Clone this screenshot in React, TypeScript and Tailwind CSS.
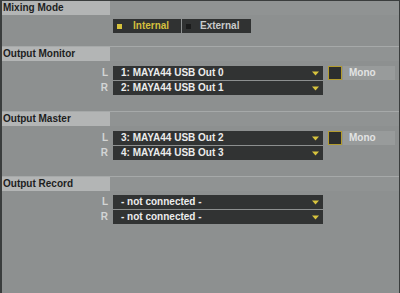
import React from "react";

const Arrow = () => (
  <svg width="7" height="5" viewBox="0 0 7 5" className="block">
    <path d="M0 0.5 L7 0.5 L3.5 4.5 Z" fill="#d8c43e" />
  </svg>
);

const Header = ({ title }: { title: string }) => (
  <div className="flex h-[14px]">
    <div className="w-[108px] bg-[#b3b5b5] pl-[1px] text-[10px] font-bold leading-[14px] text-[#1d1e1e]">
      {title}
    </div>
    <div className="flex-1 bg-[#909393]" />
  </div>
);

const Sep = () => <div className="h-px bg-[#a6a9a9]" />;

const Row = ({ ch, value, mono }: { ch: string; value: string; mono?: boolean }) => (
  <div className="flex h-[14px] items-center">
    <div className="w-[111px] pr-[5px] text-right text-[10px] font-bold leading-[14px] text-[#d3d5d5]">{ch}</div>
    <div className="flex h-[14px] w-[210px] items-center justify-between bg-[#313333] pl-[8px] pr-[4px]">
      <span className="text-[10px] font-bold leading-[14px] text-[#ececec]">{value}</span>
      <Arrow />
    </div>
    {mono && (
      <>
        <div className="ml-[5px] h-[14px] w-[14px] border border-[#b39c2e] bg-[#2c2e2e]" />
        <div className="ml-px h-[14px] w-[52px] bg-[#989b9b] pl-[6px] text-[10px] font-bold leading-[14px] text-[#e2e3e3]">
          Mono
        </div>
      </>
    )}
  </div>
);

export default function App() {
  return (
    <div
      className="h-[293px] w-[400px] overflow-hidden border-l-2 border-r border-t border-[#3a3d3d] bg-[#8d9090]"
      style={{ fontFamily: '"Liberation Sans", Arial, sans-serif' }}
    >
      <div className="flex flex-col">
        {/* Mixing Mode */}
        <Header title="Mixing Mode" />
        <div className="mt-[4px] flex h-[14px] pl-[111px]">
          <div className="flex h-[14px] w-[68px] items-center bg-[#303232]">
            <div className="ml-[4px] h-[5px] w-[5px] bg-[#d6c23c]" />
            <span className="ml-[11px] text-[10px] font-bold leading-[14px] text-[#d4bf3e]">Internal</span>
          </div>
          <div className="ml-px flex h-[14px] w-[69px] items-center bg-[#303232]">
            <div className="ml-[4px] h-[5px] w-[5px] bg-[#1a1b1b]" />
            <span className="ml-[9px] text-[10px] font-bold leading-[14px] text-[#c9cbcb]">External</span>
          </div>
        </div>
        <div className="h-[13px]" />
        <Sep />

        {/* Output Monitor */}
        <Header title="Output Monitor" />
        <div className="mt-[5px] flex flex-col gap-px">
          <Row ch="L" value="1: MAYA44 USB Out 0" mono />
          <Row ch="R" value="2: MAYA44 USB Out 1" />
        </div>
        <div className="h-[16px]" />
        <Sep />

        {/* Output Master */}
        <Header title="Output Master" />
        <div className="mt-[5px] flex flex-col gap-px">
          <Row ch="L" value="3: MAYA44 USB Out 2" mono />
          <Row ch="R" value="4: MAYA44 USB Out 3" />
        </div>
        <div className="h-[16px]" />
        <Sep />

        {/* Output Record */}
        <Header title="Output Record" />
        <div className="mt-[4px] flex flex-col gap-px">
          <Row ch="L" value="- not connected -" />
          <Row ch="R" value="- not connected -" />
        </div>
      </div>
    </div>
  );
}
